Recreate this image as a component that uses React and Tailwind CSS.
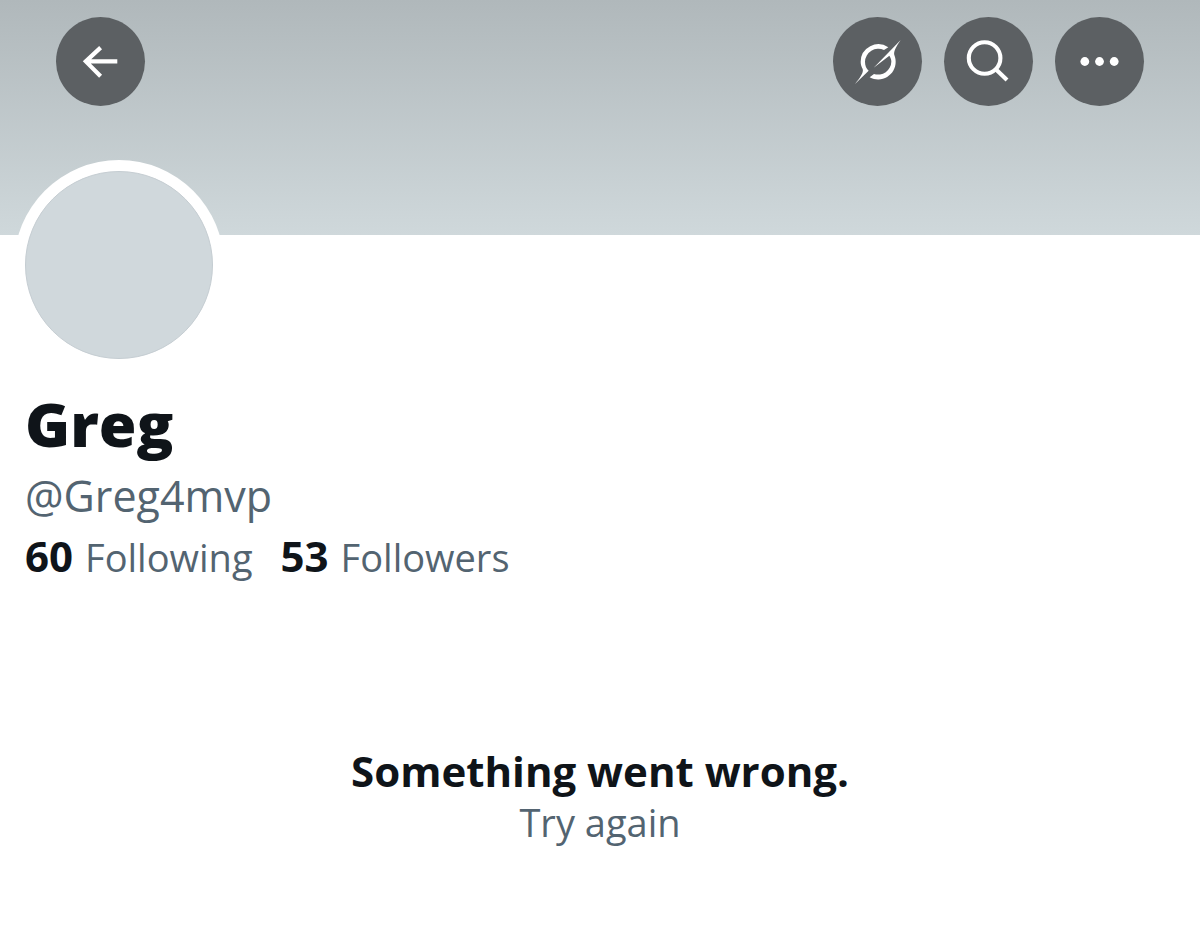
const roundButton =
  "flex size-[89px] items-center justify-center rounded-full bg-[#5c6063] text-white";

function BackIcon() {
  return (
    <svg className="size-[89px]" viewBox="0 0 89 89" fill="none" stroke="currentColor" strokeWidth="4.2" aria-hidden="true">
      <path d="M44.6 30.6 L29.8 44.4 L44.6 59.2 M30 44.4 H61.3" />
    </svg>
  );
}

function GrokIcon() {
  return (
    <svg className="size-[54px]" viewBox="0 0 162 162" fill="currentColor" aria-hidden="true">
      <path d="M112 37 A53 53 0 0 0 29 80 C29 88 31 95 35 102 C39 112 26 130 12 147 L53 107 C46 100 42 92 42 80 A40 40 0 0 1 99 45 Z" />
      <path d="M149 15 L68 98 L115 62 C119 68 121 73 121 80 A40 40 0 0 1 69 117 L56 127 A53 53 0 0 0 134 80 C134 72 132 66 130 60 C127 52 134 36 149 15 Z" />
    </svg>
  );
}

function SearchIcon() {
  return (
    <svg className="size-[89px]" viewBox="0 0 89 89" fill="none" stroke="currentColor" strokeWidth="4.1" aria-hidden="true">
      <circle cx="40.6" cy="41" r="15.8" />
      <path d="M51.8 52.2 L63 63" />
    </svg>
  );
}

function MoreIcon() {
  return (
    <svg className="size-[89px]" viewBox="0 0 89 89" fill="currentColor" aria-hidden="true">
      <circle cx="29.8" cy="44.5" r="4.4" />
      <circle cx="44.5" cy="44.5" r="4.4" />
      <circle cx="59.2" cy="44.5" r="4.4" />
    </svg>
  );
}

function Stat({ count, label }) {
  return (
    <a href="#" className="flex items-baseline gap-3">
      <span className="text-[42px] font-bold text-[#0f1419]">{count}</span>
      <span>{label}</span>
    </a>
  );
}

export default function App() {
  return (
    <div className="min-h-screen bg-white font-['Open_Sans',sans-serif] text-[#536471]">
      <header className="flex h-[235px] items-start justify-between bg-linear-to-b from-[#b0b8bb] to-[#cfd8db] px-14 pt-[17px]">
        <button type="button" aria-label="Back" className={roundButton}>
          <BackIcon />
        </button>
        <div className="flex gap-[22px]">
          <button type="button" aria-label="Grok" className={roundButton}>
            <GrokIcon />
          </button>
          <button type="button" aria-label="Search" className={roundButton}>
            <SearchIcon />
          </button>
          <button type="button" aria-label="More" className={roundButton}>
            <MoreIcon />
          </button>
        </div>
      </header>

      <main>
        <section className="-mt-[75px] px-[25px]">
          <div className="-ml-[11px] size-[210px] rounded-full bg-white p-[11px]">
            <div className="size-full rounded-full border border-[#c5cdd2] bg-[#d0d8dc]" />
          </div>
          <h1 className="mt-[18px] text-[61px] leading-[72px] font-extrabold text-[#0f1419]">Greg</h1>
          <p className="mt-[6px] text-[43px] leading-[60px]">@Greg4mvp</p>
          <div className="flex gap-7 text-[38px] leading-[60px]">
            <Stat count="60" label="Following" />
            <Stat count="53" label="Followers" />
          </div>
        </section>

        <section className="mt-[158px] flex flex-col items-center px-6 text-center">
          <h2 className="text-[42px] leading-[52px] font-bold text-[#0f1419]">Something went wrong.</h2>
          <button type="button" className="text-[38px] leading-[50px]">Try again</button>
        </section>
      </main>
    </div>
  );
}
